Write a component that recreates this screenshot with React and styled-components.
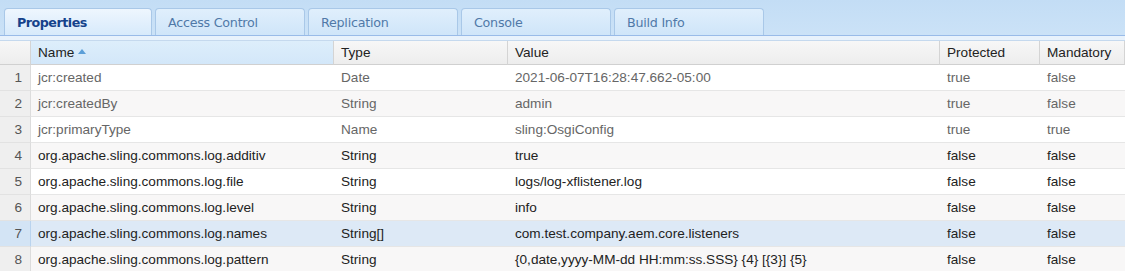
import React from 'react';
import styled, { createGlobalStyle } from 'styled-components';

const GlobalStyle = createGlobalStyle`
  html, body {
    margin: 0;
    padding: 0;
    background: #ffffff;
  }
`;

const Page = styled.div`
  width: 1125px;
  height: 271px;
  overflow: hidden;
  font-family: 'Liberation Sans', Arial, sans-serif;
`;

const TabStrip = styled.div`
  display: flex;
  gap: 3px;
  padding: 8px 0 0 4px;
  height: 27px;
  background: linear-gradient(#c3ddf5, #cbe2f7);
  border-bottom: 1px solid #99bbe8;
`;

const Tab = styled.div`
  width: ${p => (p.first ? '148px' : '150px')};
  box-sizing: border-box;
  height: 27px;
  padding-left: 12px;
  display: flex;
  align-items: center;
  border: 1px solid #a9c8e8;
  border-bottom: none;
  border-radius: 4px 4px 0 0;
  background: ${p =>
    p.active
      ? 'linear-gradient(#eef6fe, #d7eafb)'
      : 'linear-gradient(#e0effc, #cfe5f9)'};
  color: ${p => (p.active ? '#15428b' : '#5079a8')};
  font-family: Tahoma, 'DejaVu Sans', Verdana, sans-serif;
  font-size: 12.7px;
  font-weight: ${p => (p.active ? 700 : 400)};
  letter-spacing: ${p => (p.active ? '-0.5px' : '-0.25px')};
`;

const TabGap = styled.div`
  height: 4px;
  background: #e8f2fc;
  border-bottom: 1px solid #c5d9ee;
`;

const Grid = styled.div`
  display: grid;
  grid-template-columns: 31px 303px 174px 432px 100px 85px;
`;

const HeadCell = styled.div`
  height: 24px;
  display: flex;
  align-items: center;
  padding-left: ${p => (p.num ? '0' : '7px')};
  box-sizing: border-box;
  border-right: 1px solid #d4d4d4;
  border-bottom: 1px solid #d0d0d0;
  background: ${p =>
    p.sorted
      ? 'linear-gradient(#ddeefb, #d3e7f9)'
      : 'linear-gradient(#f7f7f7, #ededed)'};
  color: #222;
  font-size: 13.6px;
`;

const SortArrow = styled.span`
  display: inline-block;
  margin-left: 4px;
  width: 0;
  height: 0;
  border-left: 4px solid transparent;
  border-right: 4px solid transparent;
  border-bottom: 5px solid #5c9fd8;
  transform: translateY(-1px);
`;

const NumCell = styled.div`
  height: 26px;
  box-sizing: border-box;
  display: flex;
  align-items: center;
  justify-content: flex-end;
  padding-right: 8px;
  background: ${p => (p.selected ? '#d3e4f5' : '#efefef')};
  border-right: 1px solid ${p => (p.selected ? '#b9d3ee' : '#dcdcdc')};
  border-bottom: 1px solid #e2e2e2;
  color: #555;
  font-size: 13.6px;
`;

const Cell = styled.div`
  height: 26px;
  box-sizing: border-box;
  display: flex;
  align-items: center;
  padding-left: 7px;
  white-space: nowrap;
  overflow: hidden;
  background: ${p => (p.selected ? '#dde9f6' : p.alt ? '#f8f7f7' : '#ffffff')};
  border-bottom: 1px solid #e6e6e6;
  color: ${p => (p.muted ? '#666666' : '#222222')};
  font-size: 13.6px;
`;

const tabs = ['Properties', 'Access Control', 'Replication', 'Console', 'Build Info'];

const rows = [
  ['jcr:created', 'Date', '2021-06-07T16:28:47.662-05:00', 'true', 'false', true],
  ['jcr:createdBy', 'String', 'admin', 'true', 'false', true],
  ['jcr:primaryType', 'Name', 'sling:OsgiConfig', 'true', 'true', true],
  ['org.apache.sling.commons.log.additiv', 'String', 'true', 'false', 'false', false],
  ['org.apache.sling.commons.log.file', 'String', 'logs/log-xflistener.log', 'false', 'false', false],
  ['org.apache.sling.commons.log.level', 'String', 'info', 'false', 'false', false],
  ['org.apache.sling.commons.log.names', 'String[]', 'com.test.company.aem.core.listeners', 'false', 'false', false],
  ['org.apache.sling.commons.log.pattern', 'String', '{0,date,yyyy-MM-dd HH:mm:ss.SSS} {4} [{3}] {5}', 'false', 'false', false],
];

const App = () => (
  <Page>
    <GlobalStyle />
    <TabStrip>
      {tabs.map((t, i) => (
        <Tab key={t} active={i === 0} first={i === 0}>{t}</Tab>
      ))}
    </TabStrip>
    <TabGap />
    <Grid>
      <HeadCell num />
      <HeadCell sorted>Name<SortArrow /></HeadCell>
      <HeadCell>Type</HeadCell>
      <HeadCell>Value</HeadCell>
      <HeadCell>Protected</HeadCell>
      <HeadCell>Mandatory</HeadCell>
      {rows.map((r, i) => {
        const selected = i === 6;
        const alt = i % 2 === 1;
        const muted = r[5];
        return (
          <React.Fragment key={r[0]}>
            <NumCell selected={selected}>{i + 1}</NumCell>
            {r.slice(0, 5).map((v, j) => (
              <Cell key={j} selected={selected} alt={alt} muted={muted}>{v}</Cell>
            ))}
          </React.Fragment>
        );
      })}
    </Grid>
  </Page>
);

export default App;
